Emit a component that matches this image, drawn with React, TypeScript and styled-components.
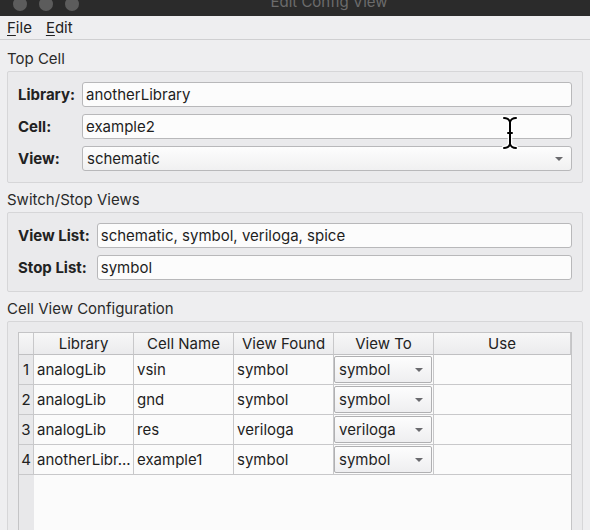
import React from "react";
import styled, { createGlobalStyle } from "styled-components";

const Global = createGlobalStyle`
  html, body { margin: 0; padding: 0; overflow: hidden; background: #eeeef0; }
  body { font-family: Inter, "Noto Sans", sans-serif; font-size: 15px; color: #1f1f1f; }
  * { box-sizing: border-box; }
`;

const Window = styled.div`
  width: 590px;
  height: 570px;
  display: flex;
  flex-direction: column;
  background: #eeeef0;
  position: relative;
`;

const TitleBar = styled.div`
  height: 16px;
  background: #2b2b2b;
  position: relative;
  overflow: hidden;
  display: flex;
  gap: 12px;
  padding-left: 13px;
`;

const Light = styled.span`
  width: 14px;
  height: 14px;
  border-radius: 50%;
  background: #5c5c5c;
  margin-top: -3px;
`;

const Title = styled.div`
  position: absolute;
  left: 0;
  right: 0;
  top: -7px;
  text-align: center;
  padding-left: 68px;
  color: #6c6c6c;
  font-size: 15px;
  line-height: 18px;
`;

const MenuBar = styled.div`
  height: 24px;
  display: flex;
  align-items: center;
  gap: 14px;
  padding: 0 7px;
  border-bottom: 1px solid #cfcfd1;
  font-size: 15px;
`;

const MenuItem = styled.span`
  color: #222;
  & u { text-decoration-thickness: 1px; text-underline-offset: 2px; }
`;

const Content = styled.div`
  flex: 1;
  display: flex;
  flex-direction: column;
  padding: 0 7px;
`;

const Heading = styled.div<{ $first?: boolean }>`
  padding-top: ${(p) => (p.$first ? 11 : 9)}px;
  padding-bottom: 4px;
  line-height: 16px;
  font-size: 15px;
  color: #2a2a2a;
`;

const Panel = styled.div`
  border: 1px solid #d6d6d8;
  border-radius: 2px;
  background: #eaeaec;
  padding: 10px 10px 11px 10px;
  display: grid;
  grid-template-columns: auto 1fr;
  column-gap: 7px;
  row-gap: 7px;
  align-items: center;
`;

const TablePanel = styled.div`
  flex: 1;
  border: 1px solid #d6d6d8;
  border-radius: 2px;
  background: #eaeaec;
  padding: 10px 10px 11px 10px;
  display: flex;
  flex-direction: column;
`;

const Label = styled.label`
  font-weight: 700;
  color: #222;
  font-size: 15px;
  white-space: nowrap;
`;

const Field = styled.div`
  height: 25px;
  border: 1px solid #b8b8ba;
  border-radius: 3px;
  background: #fcfcfc;
  display: flex;
  align-items: center;
  padding: 0 3px;
  font-size: 15px;
  color: #1e1e1e;
`;

const Combo = styled(Field)`
  background: linear-gradient(#fdfdfd, #f0f0f1);
  justify-content: space-between;
  padding: 0 8px 0 4px;
`;

const Arrow = styled.span`
  width: 0;
  height: 0;
  border-left: 4px solid transparent;
  border-right: 4px solid transparent;
  border-top: 4px solid #6a6a6e;
`;

const Table = styled.div`
  flex: 1;
  border: 1px solid #c4c4c6;
  background: #fbfbfb;
  display: grid;
  grid-template-columns: 15px 100px 100px 100px 100px 1fr;
  grid-template-rows: 22px repeat(4, 30px) 1fr;
`;

const HeadCell = styled.div`
  background: linear-gradient(#f7f7f7, #ebebed);
  border-right: 1px solid #c8c8ca;
  border-bottom: 1px solid #c0c0c2;
  display: flex;
  align-items: center;
  justify-content: center;
  font-size: 15px;
  color: #222;
  &:last-of-type { border-right: none; }
`;

const RowNum = styled.div`
  background: #e8e8ea;
  border-right: 1px solid #c8c8ca;
  border-bottom: 1px solid #c8c8ca;
  display: flex;
  align-items: center;
  justify-content: center;
  font-size: 15px;
  color: #222;
`;

const Cell = styled.div<{ $last?: boolean }>`
  border-right: ${(p) => (p.$last ? "none" : "1px solid #c8c8ca")};
  border-bottom: 1px solid #c8c8ca;
  display: flex;
  align-items: center;
  padding: 0 3px;
  font-size: 15px;
  color: #1e1e1e;
  white-space: nowrap;
  overflow: hidden;
  min-width: 0;
`;

const ComboCell = styled.div`
  border-right: 1px solid #c8c8ca;
  border-bottom: 1px solid #c8c8ca;
  padding: 1px 1px 1px 0;
  display: flex;
`;

const CellCombo = styled.div`
  flex: 1;
  border: 1px solid #b0b0b2;
  border-radius: 2px;
  background: linear-gradient(#fdfdfd, #eeeef0);
  display: flex;
  align-items: center;
  justify-content: space-between;
  padding: 0 8px 0 4px;
  font-size: 15px;
  color: #1e1e1e;
`;

const FillNum = styled.div`
  background: #e8e8ea;
`;

const FillRest = styled.div`
  grid-column: 2 / 7;
  background: #fbfbfb;
`;

const Cursor = styled.svg`
  position: absolute;
  left: 502px;
  top: 116px;
  pointer-events: none;
`;

const rows = [
  { lib: "analogLib", cell: "vsin", found: "symbol", to: "symbol" },
  { lib: "analogLib", cell: "gnd", found: "symbol", to: "symbol" },
  { lib: "analogLib", cell: "res", found: "veriloga", to: "veriloga" },
  { lib: "anotherLibr...", cell: "example1", found: "symbol", to: "symbol" },
];

const beam =
  "M2 2 C5 2 7 3 8 6 C9 3 11 2 14 2 M8 6 L8 28 M2 32 C5 32 7 31 8 28 C9 31 11 32 14 32 M6 17 L10 17";

export default function App() {
  return (
    <Window>
      <Global />
      <TitleBar>
        <Light />
        <Light />
        <Light />
        <Title>Edit Config View</Title>
      </TitleBar>
      <MenuBar>
        <MenuItem><u>F</u>ile</MenuItem>
        <MenuItem><u>E</u>dit</MenuItem>
      </MenuBar>
      <Content>
        <Heading $first>Top Cell</Heading>
        <Panel>
          <Label>Library:</Label>
          <Field>anotherLibrary</Field>
          <Label>Cell:</Label>
          <Field>example2</Field>
          <Label>View:</Label>
          <Combo>
            <span>schematic</span>
            <Arrow />
          </Combo>
        </Panel>
        <Heading>Switch/Stop Views</Heading>
        <Panel>
          <Label>View List:</Label>
          <Field>schematic, symbol, veriloga, spice</Field>
          <Label>Stop List:</Label>
          <Field>symbol</Field>
        </Panel>
        <Heading>Cell View Configuration</Heading>
        <TablePanel>
          <Table>
            <HeadCell />
            <HeadCell>Library</HeadCell>
            <HeadCell>Cell Name</HeadCell>
            <HeadCell>View Found</HeadCell>
            <HeadCell>View To</HeadCell>
            <HeadCell>Use</HeadCell>
            {rows.map((r, i) => (
              <React.Fragment key={i}>
                <RowNum>{i + 1}</RowNum>
                <Cell>{r.lib}</Cell>
                <Cell>{r.cell}</Cell>
                <Cell>{r.found}</Cell>
                <ComboCell>
                  <CellCombo>
                    <span>{r.to}</span>
                    <Arrow />
                  </CellCombo>
                </ComboCell>
                <Cell $last />
              </React.Fragment>
            ))}
            <FillNum />
            <FillRest />
          </Table>
        </TablePanel>
      </Content>
      <Cursor width="16" height="34" viewBox="0 0 16 34">
        <path d={beam} fill="none" stroke="#fff" strokeWidth="4.5" strokeLinecap="round" />
        <path d={beam} fill="none" stroke="#000" strokeWidth="2" strokeLinecap="round" />
      </Cursor>
    </Window>
  );
}
